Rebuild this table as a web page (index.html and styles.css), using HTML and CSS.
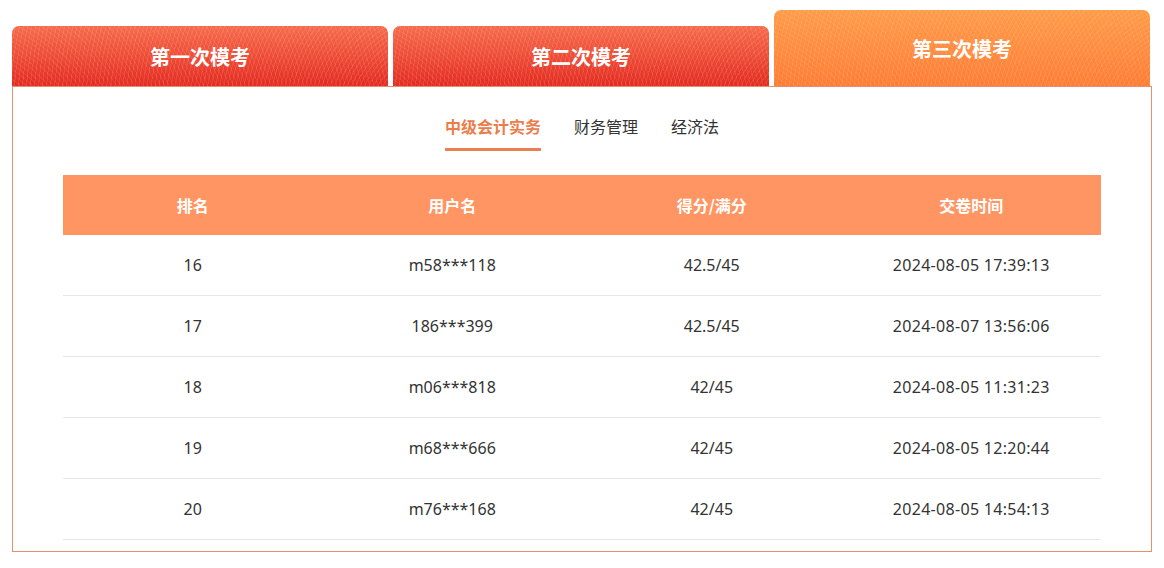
FILE: index.html
```html
<!DOCTYPE html>
<html lang="zh-CN">
<head>
<meta charset="utf-8">
<title>模考排名</title>
<link rel="stylesheet" href="styles.css">
</head>
<body>
<div class="wrap">
  <div class="tabs">
    <div class="tab tab-red">第一次模考</div>
    <div class="tab tab-red">第二次模考</div>
    <div class="tab tab-orange active">第三次模考</div>
  </div>
  <div class="panel">
    <div class="subtabs">
      <span class="subtab current">中级会计实务</span>
      <span class="subtab">财务管理</span>
      <span class="subtab">经济法</span>
    </div>
    <table class="rank">
      <thead>
        <tr><th>排名</th><th>用户名</th><th>得分/满分</th><th>交卷时间</th></tr>
      </thead>
      <tbody>
        <tr><td>16</td><td>m58***118</td><td>42.5/45</td><td class="time">2024-08-05 17:39:13</td></tr>
        <tr><td>17</td><td>186***399</td><td>42.5/45</td><td class="time">2024-08-07 13:56:06</td></tr>
        <tr><td>18</td><td>m06***818</td><td>42/45</td><td class="time">2024-08-05 11:31:23</td></tr>
        <tr><td>19</td><td>m68***666</td><td>42/45</td><td class="time">2024-08-05 12:20:44</td></tr>
        <tr><td>20</td><td>m76***168</td><td>42/45</td><td class="time">2024-08-05 14:54:13</td></tr>
      </tbody>
    </table>
  </div>
</div>
</body>
</html>
```
FILE: styles.css
```css
* { box-sizing: border-box; }
html, body { margin: 0; padding: 0; background: #fff; }
body {
  font-family: "Noto Sans CJK SC", "Microsoft YaHei", "Noto Sans", sans-serif;
  color: #333;
}
.wrap {
  padding: 10px 12px 0 12px;
  width: 1164px;
}
.tabs {
  display: flex;
  align-items: flex-end;
  gap: 5px;
  height: 76px;
}
.tab {
  width: 376px;
  height: 60px;
  border-radius: 7px 7px 0 0;
  display: flex;
  align-items: center;
  justify-content: center;
  color: #fff;
  font-size: 20px;
  font-weight: 700;
}
.tab-red {
  background:
    repeating-radial-gradient(circle at 115% 160%, rgba(255,255,255,0) 0 3px, rgba(255,255,255,0.10) 3px 4px),
    repeating-radial-gradient(circle at -20% 260%, rgba(255,255,255,0) 0 3px, rgba(255,255,255,0.08) 3px 4px),
    linear-gradient(180deg, #f66b4c 0%, #ee4c36 50%, #e32b21 100%);
}
.tab-orange {
  background:
    repeating-radial-gradient(circle at 115% 160%, rgba(255,255,255,0) 0 3px, rgba(255,255,255,0.09) 3px 4px),
    repeating-radial-gradient(circle at -20% 260%, rgba(255,255,255,0) 0 3px, rgba(255,255,255,0.07) 3px 4px),
    linear-gradient(180deg, #ff9b47 0%, #ff8c3f 50%, #ff7c35 100%);
}
.tab.active { height: 76px; }
.panel {
  width: 1140px;
  border: 1px solid #e3916c;
  padding: 0 50px 11px 50px;
  background: #fff;
}
.subtabs {
  display: flex;
  justify-content: center;
  gap: 33px;
  padding-top: 27px;
  margin-bottom: 24px;
}
.subtab {
  font-size: 16px;
  line-height: 24px;
  padding-bottom: 10px;
  border-bottom: 3px solid transparent;
  color: #333;
}
.subtab.current {
  color: #ec7c4a;
  font-weight: 700;
  border-bottom-color: #e9804f;
}
.rank {
  width: 100%;
  border-collapse: separate;
  border-spacing: 0;
  table-layout: fixed;
}
.rank th {
  box-sizing: content-box;
  background: #fe9562;
  color: #fff;
  font-weight: 700;
  font-size: 16px;
  height: 60px;
  text-align: center;
  padding: 0;
}
.rank td {
  box-sizing: content-box;
  height: 60px;
  text-align: center;
  font-family: "Noto Sans", "Noto Sans CJK SC", sans-serif;
  font-size: 16px;
  color: #333;
  border-bottom: 1px solid #e8e8e8;
  padding: 0;
}
.rank td.time { letter-spacing: 0.3px; }
```
